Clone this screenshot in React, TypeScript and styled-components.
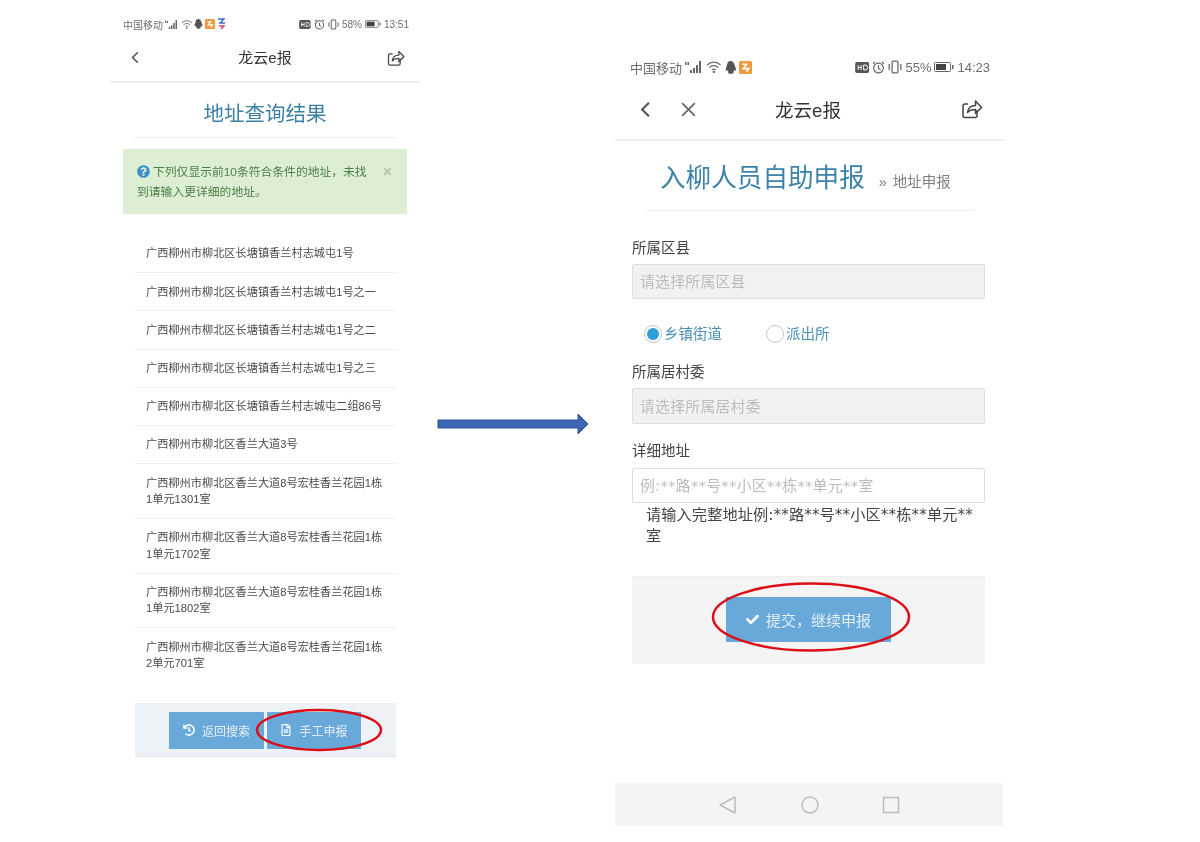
import React from "react";
import styled, { createGlobalStyle } from "styled-components";
import { FaCheck, FaHistory, FaQuestionCircle, FaRegFileAlt, FaTimes } from "react-icons/fa";

const Global = createGlobalStyle`
  html, body { margin: 0; padding: 0; background: #fff; }
  * { box-sizing: border-box; }
  body { font-family: "Liberation Sans", "Noto Sans CJK SC", sans-serif; }
`;

const Page = styled.div`
  width: 1200px;
  height: 842px;
  display: flex;
  align-items: flex-start;
  overflow: hidden;
  background: #fff;
  filter: blur(0.4px);
`;

const LeftPhone = styled.section`
  position: relative;
  width: 310px;
  margin-left: 110px;
  padding-top: 14px;
`;

const RightPhone = styled.section`
  position: relative;
  width: 388px;
  margin-top: 55px;
  margin-left: 26px;
`;

const ArrowWrap = styled.div`
  width: 152px;
  height: 24px;
  margin-top: 412px;
  margin-left: 17px;
  line-height: 0;
`;

const StatusBar = styled.div<{ $big?: boolean }>`
  display: flex;
  align-items: center;
  justify-content: space-between;
  height: ${(p) => (p.$big ? 24 : 20)}px;
  padding: ${(p) => (p.$big ? "0 13px 0 15px" : "0 11px 0 13px")};
  font-size: ${(p) => (p.$big ? 13 : 10)}px;
  color: #6d6d6d;
  white-space: nowrap;
`;

const StatusGroup = styled.div<{ $gap: number }>`
  display: flex;
  align-items: center;
  gap: ${(p) => p.$gap}px;
`;

const NavBar = styled.header<{ $big?: boolean }>`
  position: relative;
  display: flex;
  align-items: center;
  justify-content: space-between;
  height: ${(p) => (p.$big ? 62 : 49)}px;
  padding: ${(p) => (p.$big ? "0 19px 0 25px" : "0 14px 0 21px")};
  border-bottom: 2px solid #eeeeee;
`;

const NavLeft = styled.div`
  display: flex;
  align-items: center;
  gap: 29px;
  color: #555;
  line-height: 0;
`;

const NavTitle = styled.div<{ $big?: boolean }>`
  position: absolute;
  top: ${(p) => (p.$big ? 50 : 46)}%;
  left: ${(p) => (p.$big ? 193 : 155)}px;
  transform: translate(-50%, -50%);
  font-size: ${(p) => (p.$big ? 18.5 : 15)}px;
  color: #333;
  white-space: nowrap;
`;

const ResultTitle = styled.h2`
  margin: 16px 24px 0;
  height: 39px;
  border-bottom: 1px solid #eeeeee;
  text-align: center;
  font-size: 20.5px;
  line-height: 30px;
  font-weight: 400;
  color: #3c80a4;
`;

const Alert = styled.div`
  position: relative;
  margin: 11px 13px 0;
  height: 65px;
  padding: 13px 30px 0 14px;
  background: #dceed3;
  color: #4f7d4a;
  font-size: 11.8px;
  line-height: 20px;
`;

const AlertIcon = styled.span`
  display: inline-block;
  margin-right: 3px;
  color: #3d8fc4;
  font-size: 13px;
  line-height: 0;
  vertical-align: -2px;
`;

const AlertClose = styled.span`
  position: absolute;
  top: 17px;
  right: 14px;
  color: #b5c7ae;
  font-size: 11px;
  line-height: 0;
`;

const AddressList = styled.ul`
  list-style: none;
  margin: 21px 23px 0 25px;
  padding: 0;
`;

const AddressRow = styled.li`
  padding: 10.4px 14px 10.3px 11px;
  border-bottom: 1px solid #f0f0f0;
  font-size: 11.2px;
  line-height: 16.5px;
  color: #4a4a4a;
  &:last-child { border-bottom: 0; }
`;

const LeftFooter = styled.div`
  display: flex;
  gap: 3px;
  margin: 21px 24px 0 25px;
  height: 54px;
  padding: 9px 0 0 34px;
  background: #edf2f6;
  border-bottom: 1px solid #dfe6ea;
`;

const ActionButton = styled.div<{ $w: number; $h: number; $fs: number }>`
  display: flex;
  align-items: center;
  justify-content: center;
  gap: 7px;
  width: ${(p) => p.$w}px;
  height: ${(p) => p.$h}px;
  background: #69a9d9;
  color: #e3eef6;
  font-size: ${(p) => p.$fs}px;
  white-space: nowrap;
  svg { color: #fff; }
`;

const Ellipse = styled.svg`
  position: absolute;
  overflow: visible;
  pointer-events: none;
`;

const FormTitle = styled.div`
  display: flex;
  align-items: baseline;
  height: 70px;
  margin: 0 30px 0 30px;
  padding: 19px 0 0 15px;
  border-bottom: 1px solid #eeeeee;
`;

const BigTitle = styled.h1`
  margin: 0;
  font-size: 25.6px;
  line-height: 36px;
  font-weight: 400;
  color: #3c82ab;
  white-space: nowrap;
`;

const SubTitle = styled.small`
  margin-left: 14px;
  font-size: 14.5px;
  word-spacing: 2px;
  color: #808080;
  white-space: nowrap;
`;

const FormBody = styled.div`
  padding: 27px 18px 0 17px;
`;

const FieldLabel = styled.label<{ $top?: number }>`
  display: block;
  height: 21px;
  margin-top: ${(p) => p.$top ?? 0}px;
  font-size: 14.5px;
  line-height: 21px;
  color: #444;
`;

const InputBox = styled.div<{ $enabled?: boolean; $h: number; $top: number }>`
  display: flex;
  align-items: center;
  height: ${(p) => p.$h}px;
  margin-top: ${(p) => p.$top}px;
  padding: 0 0 2px 7px;
  border: 1px solid #dedede;
  border-radius: 2px;
  background: ${(p) => (p.$enabled ? "#fff" : "#f1f1f1")};
  color: #bcbcbc;
  font-family: "DejaVu Sans", "Noto Sans CJK SC", sans-serif;
  font-size: 14.8px;
  letter-spacing: 0.3px;
  white-space: nowrap;
`;

const RadioRow = styled.div`
  display: flex;
  align-items: center;
  height: 36px;
  margin-top: 17px;
  padding-left: 12px;
  gap: 44px;
`;

const RadioItem = styled.div`
  display: flex;
  align-items: center;
  gap: 2px;
  padding-bottom: 3px;
  font-size: 14.5px;
  color: #4a8fb5;
`;

const RadioDot = styled.span<{ $on?: boolean }>`
  display: flex;
  align-items: center;
  justify-content: center;
  width: 18px;
  height: 18px;
  margin-top: 3px;
  border: 1px solid #c4c4c4;
  border-radius: 50%;
  background: #fff;
  &::after {
    content: "";
    display: ${(p) => (p.$on ? "block" : "none")};
    width: 12px;
    height: 12px;
    border-radius: 50%;
    background: #2f9fd8;
  }
`;

const HelpText = styled.p`
  margin: 2px 0 0;
  padding: 0 8px 0 14px;
  height: 71px;
  font-family: "DejaVu Sans", "Noto Sans CJK SC", sans-serif;
  font-size: 15.2px;
  letter-spacing: 0.1px;
  line-height: 21px;
  color: #444;
  word-break: break-all;
`;

const SubmitBar = styled.div`
  display: flex;
  justify-content: center;
  height: 88px;
  padding: 20px 0 0 0;
  background: #f4f4f4;
  border-top: 1px solid #eeeeee;
`;

const SystemNav = styled.nav`
  display: flex;
  align-items: center;
  justify-content: center;
  gap: 62px;
  height: 43px;
  margin-top: 119px;
  background: #f3f4f6;
  line-height: 0;
`;

const Back = ({ size }: { size: number }) => (
  <svg width={size * 0.62} height={size} viewBox="0 0 10 16" fill="none" stroke="#555" strokeWidth="2">
    <path d="M8.5 1.5 2 8l6.5 6.5" />
  </svg>
);

const Share = ({ size }: { size: number }) => (
  <svg width={size} height={size} viewBox="0 0 24 24" fill="none" stroke="#444" strokeWidth="1.5" strokeLinejoin="round">
    <path d="M17 13v5.5a2 2 0 0 1-2 2H5a2 2 0 0 1-2-2V9a2 2 0 0 1 2-2h3" />
    <path d="M7.5 15.5c.6-4.500 3.500-7 8-7V4l6 6.500-6 6V12.500c-3.500 0-6 .8-8 3z" />
  </svg>
);

const Signal = ({ h }: { h: number }) => (
  <svg width={h * 1.5} height={h} viewBox="0 0 18 12" fill="#666">
    <path d="M0 1h1.500v3H0zM2.500 1H4v3H2.500zM5 9h2v3H5zM8 7h2v5H8zM11 4h2v8h-2zM14 0h2v12h-2z" />
  </svg>
);

const Wifi = ({ h }: { h: number }) => (
  <svg width={h * 1.3} height={h} viewBox="0 0 16 12" fill="none" stroke="#666" strokeWidth="1.200">
    <path d="M1 4c4-4 10-4 14 0M3.500 6.500c2.500-2.500 6.500-2.500 9 0M6 9c1.200-1 2.800-1 4 0" />
    <circle cx="8" cy="11" r=".6" fill="#666" />
  </svg>
);

const Qq = ({ h }: { h: number }) => (
  <svg width={h * 0.85} height={h} viewBox="0 0 10 12" fill="#555">
    <path d="M5 0C2.800 0 1.800 1.800 1.800 4 1 5.500.3 7.500.8 9c.5.200 1-.5 1.200-1 .2 1 .7 1.800 1.300 2.200-1 .5-.8 1.500 1 1.500.6 0 .8-.1 1-.2.2.100.400.2 1 .2 1.800 0 2-1 1-1.500.6-.4 1.100-1.200 1.300-2.200.2.500.7 1.200 1.200 1 .5-1.500-.2-3.500-1-5C8.200 1.800 7.200 0 5 0z" />
  </svg>
);

const AppBadge = ({ h }: { h: number }) => (
  <svg width={h} height={h} viewBox="0 0 12 12">
    <rect width="12" height="12" rx="1.500" fill="#ee9a3a" />
    <path d="M3 3h4L4 7h5l-2 3" fill="none" stroke="#fff" strokeWidth="1.500" />
  </svg>
);

const Hd = ({ h }: { h: number }) => (
  <svg width={h * 1.300} height={h} viewBox="0 0 14 11">
    <rect width="14" height="11" rx="2" fill="#555" />
    <path d="M3 3v5M6 3v5M3 5.500h3M8.500 3v5h1.500a2 2 0 0 0 0-5z" fill="none" stroke="#fff" strokeWidth="1" />
  </svg>
);

const Alarm = ({ h }: { h: number }) => (
  <svg width={h} height={h} viewBox="0 0 12 12" fill="none" stroke="#666" strokeWidth="1.100">
    <circle cx="6" cy="6.500" r="4.500" />
    <path d="M6 4v3l2 1M1 2.500 3 .8M11 2.500 9 .8" />
  </svg>
);

const Vibrate = ({ h }: { h: number }) => (
  <svg width={h} height={h} viewBox="0 0 12 12" fill="none" stroke="#666" strokeWidth="1.100">
    <rect x="3.500" y="1" width="5" height="10" rx=".8" />
    <path d="M1 3.500v5M11 3.500v5" />
  </svg>
);

const Battery = ({ h, level }: { h: number; level: number }) => (
  <svg width={h * 2} height={h} viewBox="0 0 20 10">
    <rect x=".5" y=".5" width="16" height="9" rx="1" fill="none" stroke="#666" />
    <rect x="2" y="2" width={level} height="6" fill="#444" />
    <rect x="18" y="3" width="1.500" height="4" fill="#666" />
  </svg>
);

const MiniApp = () => (
  <svg width="9" height="12" viewBox="0 0 9 12">
    <path d="M1 1h6L3 5h5" fill="none" stroke="#3b6fc4" strokeWidth="1.400" />
    <path d="M2 8h5l-3 3" fill="none" stroke="#d3456c" strokeWidth="1.400" />
  </svg>
);

const addresses = [
  "广西柳州市柳北区长塘镇香兰村志城屯1号",
  "广西柳州市柳北区长塘镇香兰村志城屯1号之一",
  "广西柳州市柳北区长塘镇香兰村志城屯1号之二",
  "广西柳州市柳北区长塘镇香兰村志城屯1号之三",
  "广西柳州市柳北区长塘镇香兰村志城屯二组86号",
  "广西柳州市柳北区香兰大道3号",
  "广西柳州市柳北区香兰大道8号宏桂香兰花园1栋1单元1301室",
  "广西柳州市柳北区香兰大道8号宏桂香兰花园1栋1单元1702室",
  "广西柳州市柳北区香兰大道8号宏桂香兰花园1栋1单元1802室",
  "广西柳州市柳北区香兰大道8号宏桂香兰花园1栋2单元701室",
];

export default function App() {
  return (
    <Page>
      <Global />
      <LeftPhone>
        <StatusBar>
          <StatusGroup $gap={2}>
            <span>中国移动</span>
            <Signal h={9} />
            <Wifi h={9} />
            <Qq h={10} />
            <AppBadge h={10} />
            <MiniApp />
          </StatusGroup>
          <StatusGroup $gap={3}>
            <Hd h={9} />
            <Alarm h={11} />
            <Vibrate h={11} />
            <span>58%</span>
            <Battery h={8} level={10} />
            <span>13:51</span>
          </StatusGroup>
        </StatusBar>
        <NavBar>
          <Back size={13} />
          <NavTitle>龙云e报</NavTitle>
          <Share size={20} />
        </NavBar>
        <ResultTitle>地址查询结果</ResultTitle>
        <Alert>
          <AlertIcon>
            <FaQuestionCircle />
          </AlertIcon>
          下列仅显示前10条符合条件的地址，未找到请输入更详细的地址。
          <AlertClose>
            <FaTimes />
          </AlertClose>
        </Alert>
        <AddressList>
          {addresses.map((a) => (
            <AddressRow key={a}>{a}</AddressRow>
          ))}
        </AddressList>
        <LeftFooter>
          <ActionButton $w={95} $h={37} $fs={12}>
            <FaHistory size={12} />
            返回搜索
          </ActionButton>
          <ActionButton $w={94} $h={37} $fs={12}>
            <FaRegFileAlt size={12} />
            手工申报
          </ActionButton>
        </LeftFooter>
        <Ellipse style={{ left: 145, top: 708 }} width="128" height="44" viewBox="0 0 128 44">
          <ellipse cx="64" cy="22" rx="62" ry="20" fill="none" stroke="#dc0f18" strokeWidth="2.500" />
        </Ellipse>
      </LeftPhone>

      <ArrowWrap>
        <svg width="152" height="24" viewBox="0 0 152 24">
          <path d="M1 8h140V2l10 10-10 10v-6H1z" fill="#3a66b5" stroke="#2f5597" strokeWidth="1" />
        </svg>
      </ArrowWrap>

      <RightPhone>
        <StatusBar $big>
          <StatusGroup $gap={3}>
            <span>中国移动</span>
            <Signal h={12} />
            <Wifi h={12} />
            <Qq h={13} />
            <AppBadge h={13} />
          </StatusGroup>
          <StatusGroup $gap={3}>
            <Hd h={11} />
            <Alarm h={13} />
            <Vibrate h={14} />
            <span>55%</span>
            <Battery h={10} level={10} />
            <span>14:23</span>
          </StatusGroup>
        </StatusBar>
        <NavBar $big>
          <NavLeft>
            <Back size={17} />
            <svg width="17" height="17" viewBox="0 0 16 16" fill="none" stroke="#666" strokeWidth="1.600">
              <path d="M2 2l12 12M14 2 2 14" />
            </svg>
          </NavLeft>
          <NavTitle $big>龙云e报</NavTitle>
          <Share size={24} />
        </NavBar>
        <FormTitle>
          <BigTitle>入柳人员自助申报</BigTitle>
          <SubTitle>» 地址申报</SubTitle>
        </FormTitle>
        <FormBody>
          <FieldLabel>所属区县</FieldLabel>
          <InputBox $h={35} $top={5}>请选择所属区县</InputBox>
          <RadioRow>
            <RadioItem>
              <RadioDot $on />
              乡镇街道
            </RadioItem>
            <RadioItem>
              <RadioDot />
              派出所
            </RadioItem>
          </RadioRow>
          <FieldLabel $top={10}>所属居村委</FieldLabel>
          <InputBox $h={36} $top={5}>请选择所属居村委</InputBox>
          <FieldLabel $top={17}>详细地址</FieldLabel>
          <InputBox $enabled $h={35} $top={6}>例:**路**号**小区**栋**单元**室</InputBox>
          <HelpText>请输入完整地址例:**路**号**小区**栋**单元**室</HelpText>
          <SubmitBar>
            <ActionButton $w={165} $h={45} $fs={15}>
              <FaCheck size={13} />
              提交，继续申报
            </ActionButton>
          </SubmitBar>
        </FormBody>
        <SystemNav>
          <svg width="20" height="20" viewBox="0 0 20 20" fill="none" stroke="#bdbdbd" strokeWidth="1.500">
            <path d="M17 2v16L2 10z" strokeLinejoin="round" />
          </svg>
          <svg width="20" height="20" viewBox="0 0 20 20" fill="none" stroke="#bdbdbd" strokeWidth="1.500">
            <circle cx="10" cy="10" r="8" />
          </svg>
          <svg width="18" height="18" viewBox="0 0 18 18" fill="none" stroke="#bdbdbd" strokeWidth="1.500">
            <rect x="1.500" y="1.500" width="15" height="15" />
          </svg>
        </SystemNav>
        <Ellipse style={{ left: 96, top: 527 }} width="200" height="70" viewBox="0 0 200 70">
          <ellipse cx="100" cy="35" rx="98" ry="33.500" fill="none" stroke="#dc0f18" strokeWidth="2.500" />
        </Ellipse>
      </RightPhone>
    </Page>
  );
}
